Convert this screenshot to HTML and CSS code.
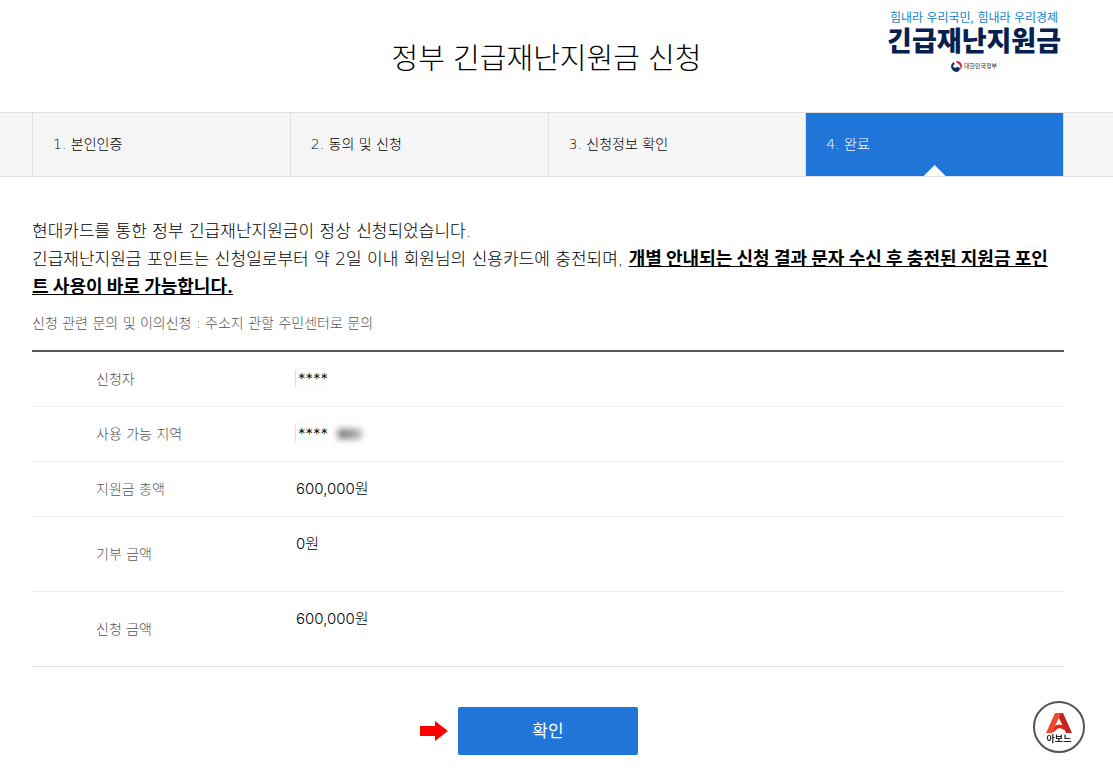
FILE: index.html
```html
<!DOCTYPE html>
<html lang="ko">
<head>
<meta charset="utf-8">
<meta name="viewport" content="width=device-width, initial-scale=1">
<title>정부 긴급재난지원금 신청</title>
<link rel="stylesheet" href="styles.css">
</head>
<body>
<header class="header">
  <h1 class="title">정부 긴급재난지원금 신청</h1>
  <div class="brand">
    <span class="brand-slogan">힘내라 우리국민, 힘내라 우리경제</span>
    <strong class="brand-name">긴급재난지원금</strong>
    <span class="brand-gov">
      <svg class="brand-mark" viewBox="0 0 24 24" aria-hidden="true">
        <path d="M10 1c7-2 14 3 14 10 0 4-2 7-4 9 2-7-1-13-6-15z" fill="#d6243b"/>
        <path d="M6 2C1 5-1 11 1 16c2 5 7 8 12 8 4-1 7-4 6-8-1-3-4-4-7-2-3 1-6 1-7-2C4 9 6 8 8 7z" fill="#0f2d5c"/>
      </svg>
      대한민국정부
    </span>
  </div>
</header>

<nav class="steps" aria-label="신청 단계">
  <ol class="steps-list">
    <li class="step">1. 본인인증</li>
    <li class="step">2. 동의 및 신청</li>
    <li class="step">3. 신청정보 확인</li>
    <li class="step step-current" aria-current="step">4. 완료</li>
  </ol>
</nav>

<main class="content">
  <p class="message">현대카드를 통한 정부 긴급재난지원금이 정상 신청되었습니다.<br>긴급재난지원금 포인트는 신청일로부터 약 2일 이내 회원님의 신용카드에 충전되며, <strong class="notice">개별 안내되는 신청 결과 문자 수신 후 충전된 지원금 포인<br>트 사용이 바로 가능합니다.</strong></p>
  <p class="inquiry">신청 관련 문의 및 이의신청 : 주소지 관할 주민센터로 문의</p>

  <table class="summary">
    <tbody>
      <tr><th scope="row">신청자</th><td><span class="masked">****</span></td></tr>
      <tr><th scope="row">사용 가능 지역</th><td><span class="masked">****</span><span class="smudge" aria-hidden="true"></span></td></tr>
      <tr><th scope="row">지원금 총액</th><td>600,000원</td></tr>
      <tr class="tall"><th scope="row">기부 금액</th><td>0원</td></tr>
      <tr class="tall"><th scope="row">신청 금액</th><td>600,000원</td></tr>
    </tbody>
  </table>

  <div class="actions">
    <svg class="arrow" viewBox="0 0 28 20" aria-hidden="true"><path d="M0 5h15V0l13 10-13 10v-5H0z" fill="#f00"/></svg>
    <button class="confirm" type="button">확인</button>
  </div>
</main>

<aside class="badge">
  <svg class="badge-mark" viewBox="0 0 26 20" aria-hidden="true">
    <path d="M9 0h8l9 20h-6L12 3z" fill="#c4211f"/>
    <path d="M9 0h6L6 20H0z" fill="#f04a2c"/>
    <path d="M6 20l3-7c4-3 8-2 12 4l-3 0c-4-3-7-2-9 1z" fill="#d92a20"/>
    <path d="M13 6l3 6c-2-1-4-1-6 0z" fill="#fff"/>
  </svg>
  <span class="badge-text">아보느</span>
</aside>
</body>
</html>
```
FILE: styles.css
```css
* {
  box-sizing: border-box;
}

body {
  margin: 0;
  background: #fff;
  color: #000;
  font-family: "DejaVu Sans", "Noto Sans CJK KR", sans-serif;
  font-size: 14px;
  font-weight: 300;
  line-height: 24px;
}

.header {
  display: grid;
  grid-template-columns: 1fr auto 1fr;
  align-items: start;
  min-height: 112px;
  padding: 8px 52px 0 32px;
}

.title {
  grid-column: 2;
  margin: 31px 0 0;
  font-family: Inter, "Noto Sans CJK KR", sans-serif;
  font-size: 29px;
  font-weight: 300;
  line-height: 40px;
}

.brand {
  display: flex;
  flex-direction: column;
  align-items: center;
  justify-self: end;
  font-family: Inter, "Noto Sans CJK KR", sans-serif;
  white-space: nowrap;
}

.brand-slogan {
  color: #1583c9;
  font-size: 12px;
  font-weight: 400;
  line-height: 20px;
}

.brand-name {
  color: #06204f;
  font-size: 27px;
  font-weight: 900;
  line-height: 28px;
}

.brand-gov {
  display: flex;
  align-items: center;
  gap: 2px;
  color: #333;
  font-size: 6px;
  font-weight: 400;
  line-height: 20px;
}

.brand-mark {
  width: 11px;
  height: 11px;
}

.steps {
  padding: 0 49px 0 32px;
  border-top: 1px solid #dfdfdf;
  border-bottom: 1px solid #dfdfdf;
  background: #f5f5f5;
}

.steps-list {
  display: grid;
  grid-template-columns: repeat(4, 1fr);
  margin: 0;
  padding: 0;
  border-right: 1px solid #dfdfdf;
  list-style: none;
}

.step {
  padding: 19px 20px 20px;
  border-left: 1px solid #dfdfdf;
}

.step-current {
  position: relative;
  background: #1f75d8;
  color: #fff;
}

.step-current::after {
  content: "";
  position: absolute;
  bottom: 0;
  left: 50%;
  width: 22px;
  height: 11px;
  background: #fff;
  clip-path: polygon(50% 0, 100% 100%, 0 100%);
  transform: translateX(-50%);
}

.content {
  padding: 40px 49px 0 32px;
}

.message {
  margin: 0;
  font-size: 17px;
  line-height: 28px;
}

.notice {
  font-family: Inter, "Noto Sans CJK KR", sans-serif;
  font-size: 18px;
  font-weight: 700;
  text-decoration: underline;
}

.inquiry {
  margin: 10px 0 15px;
  color: #555;
}

.summary {
  width: 100%;
  border-top: 2px solid #555;
  border-spacing: 0;
}

.summary th,
.summary td {
  height: 55px;
  padding: 15px 0;
  border-bottom: 1px solid #eee;
  text-align: left;
  vertical-align: top;
}

.summary th {
  width: 264px;
  padding-left: 64px;
  color: #555;
  font-weight: 300;
}

.summary td {
  font-family: Inter, "Noto Sans CJK KR", sans-serif;
  font-size: 15px;
}

.summary .tall th,
.summary .tall td {
  height: 75px;
}

.summary .tall th {
  vertical-align: middle;
}

.summary tr:last-child th,
.summary tr:last-child td {
  border-bottom-color: #dfdfdf;
}

.masked {
  padding-left: 2px;
  box-shadow: -1px 0 2px -1px #a99;
}

.smudge {
  display: inline-block;
  width: 24px;
  height: 10px;
  margin-left: 10px;
  background: linear-gradient(90deg, #767076, #999 60%, #bbb);
  filter: blur(3px);
}

.actions {
  display: grid;
  grid-template-columns: 1fr auto 1fr;
  align-items: center;
  gap: 10px;
  margin-top: 40px;
}

.arrow {
  justify-self: end;
  width: 28px;
  height: 20px;
}

.confirm {
  width: 180px;
  height: 48px;
  padding: 0;
  border: 0;
  border-radius: 2px;
  background: #1f75d8;
  color: #fff;
  font: inherit;
  font-size: 17px;
  font-weight: 400;
}

.badge {
  position: fixed;
  right: 28px;
  bottom: 25px;
  display: flex;
  flex-direction: column;
  align-items: center;
  width: 52px;
  height: 52px;
  padding-top: 10px;
  border: 2px solid #555;
  border-radius: 50%;
  background: #fff;
}

.badge-mark {
  width: 26px;
  height: 20px;
}

.badge-text {
  color: #222;
  font-size: 9px;
  font-weight: 700;
  line-height: 12px;
}
```
